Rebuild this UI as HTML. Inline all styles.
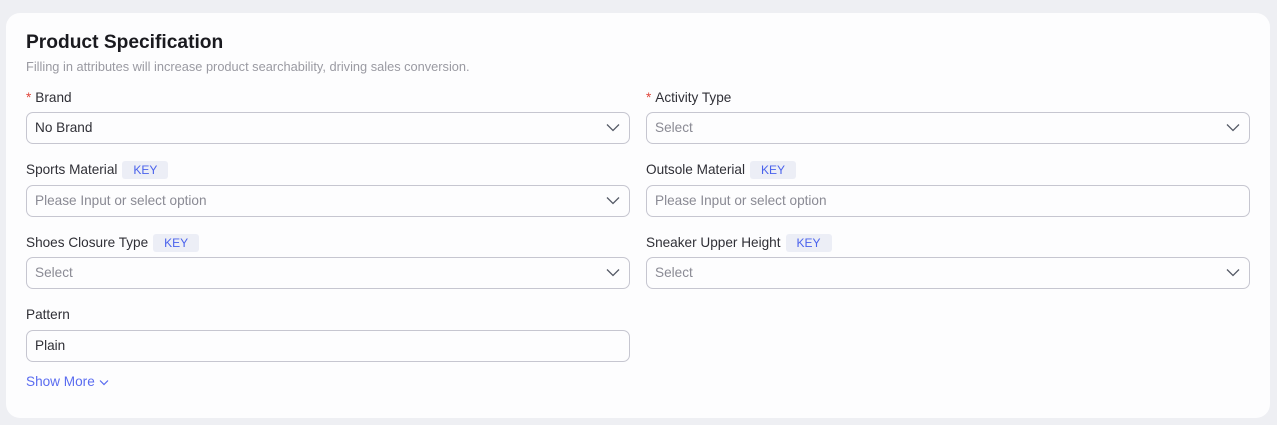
<!DOCTYPE html>
<html><head><meta charset="utf-8"><style>
*{box-sizing:border-box;margin:0;padding:0}
body{width:1277px;height:425px;background:#eeeff3;font-family:"Liberation Sans",Arial,sans-serif;position:relative;overflow:hidden}
.card{position:absolute;left:6px;top:13px;width:1264px;height:405px;background:#fdfdfe;border-radius:14px}
.t{position:absolute;left:26px;top:32px;font-size:19.2px;font-weight:bold;color:#1a1a1f}
.s{position:absolute;left:26px;top:59px;font-size:12.8px;color:#9a9aa2}
.l{position:absolute;font-size:13.6px;color:#2f2f36;height:18px;line-height:18px}
.l .r{color:#e0453a;margin-right:4px}
.k{display:inline-block;margin-left:5px;background:#eceef6;color:#4a62ec;font-size:12px;padding:0 11px;border-radius:3px;height:18px;line-height:18px;vertical-align:top}
.i{position:absolute;width:604px;height:32px;border:1px solid #c6c6d0;border-radius:7px;font-size:13.6px;line-height:30px;padding-left:8px;color:#2f2f36}
.i.p{color:#8a8a94}
.i svg{position:absolute;right:9px;top:10px}
.sm{position:absolute;left:26px;top:374px;font-size:13.6px;color:#5a6cf0}
</style></head><body>
<div class="card"></div>
<div class="t">Product Specification</div>
<div class="s">Filling in attributes will increase product searchability, driving sales conversion.</div>

<div class="l" style="left:26px;top:89px"><span class="r">*</span>Brand</div>
<div class="i" style="left:26px;top:112px">No Brand<svg width="14" height="9" viewBox="0 0 14 9"><path d="M1 1.5l6 6 6-6" fill="none" stroke="#555a66" stroke-width="1.3"/></svg></div>
<div class="l" style="left:646px;top:89px"><span class="r">*</span>Activity Type</div>
<div class="i p" style="left:646px;top:112px">Select<svg width="14" height="9" viewBox="0 0 14 9"><path d="M1 1.5l6 6 6-6" fill="none" stroke="#555a66" stroke-width="1.3"/></svg></div>

<div class="l" style="left:26px;top:161px">Sports Material<span class="k">KEY</span></div>
<div class="i p" style="left:26px;top:185px">Please Input or select option<svg width="14" height="9" viewBox="0 0 14 9"><path d="M1 1.5l6 6 6-6" fill="none" stroke="#555a66" stroke-width="1.3"/></svg></div>
<div class="l" style="left:646px;top:161px">Outsole Material<span class="k">KEY</span></div>
<div class="i p" style="left:646px;top:185px">Please Input or select option</div>

<div class="l" style="left:26px;top:234px">Shoes Closure Type<span class="k">KEY</span></div>
<div class="i p" style="left:26px;top:257px">Select<svg width="14" height="9" viewBox="0 0 14 9"><path d="M1 1.5l6 6 6-6" fill="none" stroke="#555a66" stroke-width="1.3"/></svg></div>
<div class="l" style="left:646px;top:234px">Sneaker Upper Height<span class="k">KEY</span></div>
<div class="i p" style="left:646px;top:257px">Select<svg width="14" height="9" viewBox="0 0 14 9"><path d="M1 1.5l6 6 6-6" fill="none" stroke="#555a66" stroke-width="1.3"/></svg></div>

<div class="l" style="left:26px;top:306px">Pattern</div>
<div class="i" style="left:26px;top:330px">Plain</div>

<div class="sm">Show More <svg width="10" height="7" viewBox="0 0 10 7"><path d="M1 1.5l4 4 4-4" fill="none" stroke="#5a6cf0" stroke-width="1.2"/></svg></div>
</body></html>
